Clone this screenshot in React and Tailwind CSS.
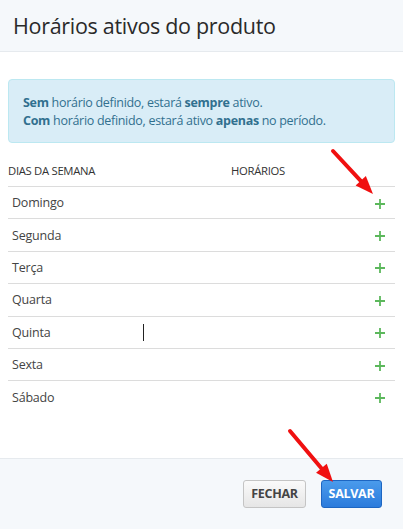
import React from 'react';

const days = ['Domingo', 'Segunda', 'Terça', 'Quarta', 'Quinta', 'Sexta', 'Sábado'];

const PlusIcon = () => (
  <svg width="10" height="10" viewBox="0 0 10 10" className="block">
    <path d="M5 0v10M0 5h10" stroke="#5cb85c" strokeWidth="1.8" />
  </svg>
);

// red annotation arrow, tip at (x2,y2)
const Arrow = ({ x1, y1, x2, y2 }) => {
  const ang = Math.atan2(y2 - y1, x2 - x1);
  const len = 18;
  const half = 7;
  const bx = x2 - Math.cos(ang) * len;
  const by = y2 - Math.sin(ang) * len;
  const px = -Math.sin(ang) * half;
  const py = Math.cos(ang) * half;
  return (
    <g>
      <line x1={x1} y1={y1} x2={bx} y2={by} stroke="#f01010" strokeWidth="4" strokeLinecap="round" />
      <polygon points={`${x2},${y2} ${bx + px},${by + py} ${bx - px},${by - py}`} fill="#f01010" />
    </g>
  );
};

export default function App() {
  return (
    <div className="relative w-[403px] h-[529px] bg-white flex flex-col overflow-hidden text-[#333]" style={{ fontFamily: '"Open Sans", "Noto Sans", sans-serif' }}>
      {/* Header */}
      <div className="h-[52px] shrink-0 bg-[#f5f8fb] border-b border-[#e6eaee] flex items-center px-[13px] pt-[2px]">
        <h1 className="text-[21.5px] text-[#2a2a2a] tracking-[-0.3px]">Horários ativos do produto</h1>
      </div>

      {/* Body */}
      <div className="flex-1 px-[8px] pt-[27px]">
        <div className="rounded-[4px] border border-[#bce8f1] bg-[#d9edf7] text-[#31708f] text-[12.5px] leading-[18px] pl-[14px] pt-[14px] pb-[12px] tracking-[-0.3px]">
          <p><b>Sem</b> horário definido, estará <b>sempre</b> ativo.</p>
          <p><b>Com</b> horário definido, estará ativo <b>apenas</b> no período.</p>
        </div>

        <div className="mt-[15px] h-[28px] flex pt-[5px] text-[11.3px] leading-[15px] text-[#333] tracking-[-0.3px]">
          <div className="w-[223px]">DIAS DA SEMANA</div>
          <div>HORÁRIOS</div>
        </div>

        {days.map((d, i) => (
          <div key={d} className="relative h-[32.4px] border-t border-[#dcdcdc] flex items-center justify-between pl-[4px] pr-[10px] pt-[2px] text-[12.5px] text-[#444] tracking-[-0.2px]">
            <span>{d}</span>
            <PlusIcon />
            {i === 4 && <span className="absolute left-[135px] top-[7px] w-[1px] h-[17px] bg-[#222]" />}
          </div>
        ))}
      </div>

      {/* Footer */}
      <div className="h-[71px] shrink-0 bg-[#f5f8fb] border-t border-[#e6eaee] flex items-start justify-end gap-[15px] pt-[21px] pr-[21px]">
        <button className="h-[28px] w-[63px] rounded-[3px] border border-[#c4c4c4] bg-gradient-to-b from-[#fafafa] to-[#e6e6e6] text-[#444] text-[12.5px] font-bold tracking-[-0.3px]">
          FECHAR
        </button>
        <button className="h-[28px] w-[61px] rounded-[3px] border border-[#1d66c2] bg-gradient-to-b from-[#4a9bec] to-[#2b7bdc] text-white text-[12.5px] font-bold tracking-[-0.3px]">
          SALVAR
        </button>
      </div>

      {/* Annotation arrows */}
      <svg className="absolute inset-0 pointer-events-none" width="403" height="529">
        <Arrow x1={333} y1={151} x2={373} y2={194} />
        <Arrow x1={290} y1={431} x2={333} y2={482} />
      </svg>
    </div>
  );
}
